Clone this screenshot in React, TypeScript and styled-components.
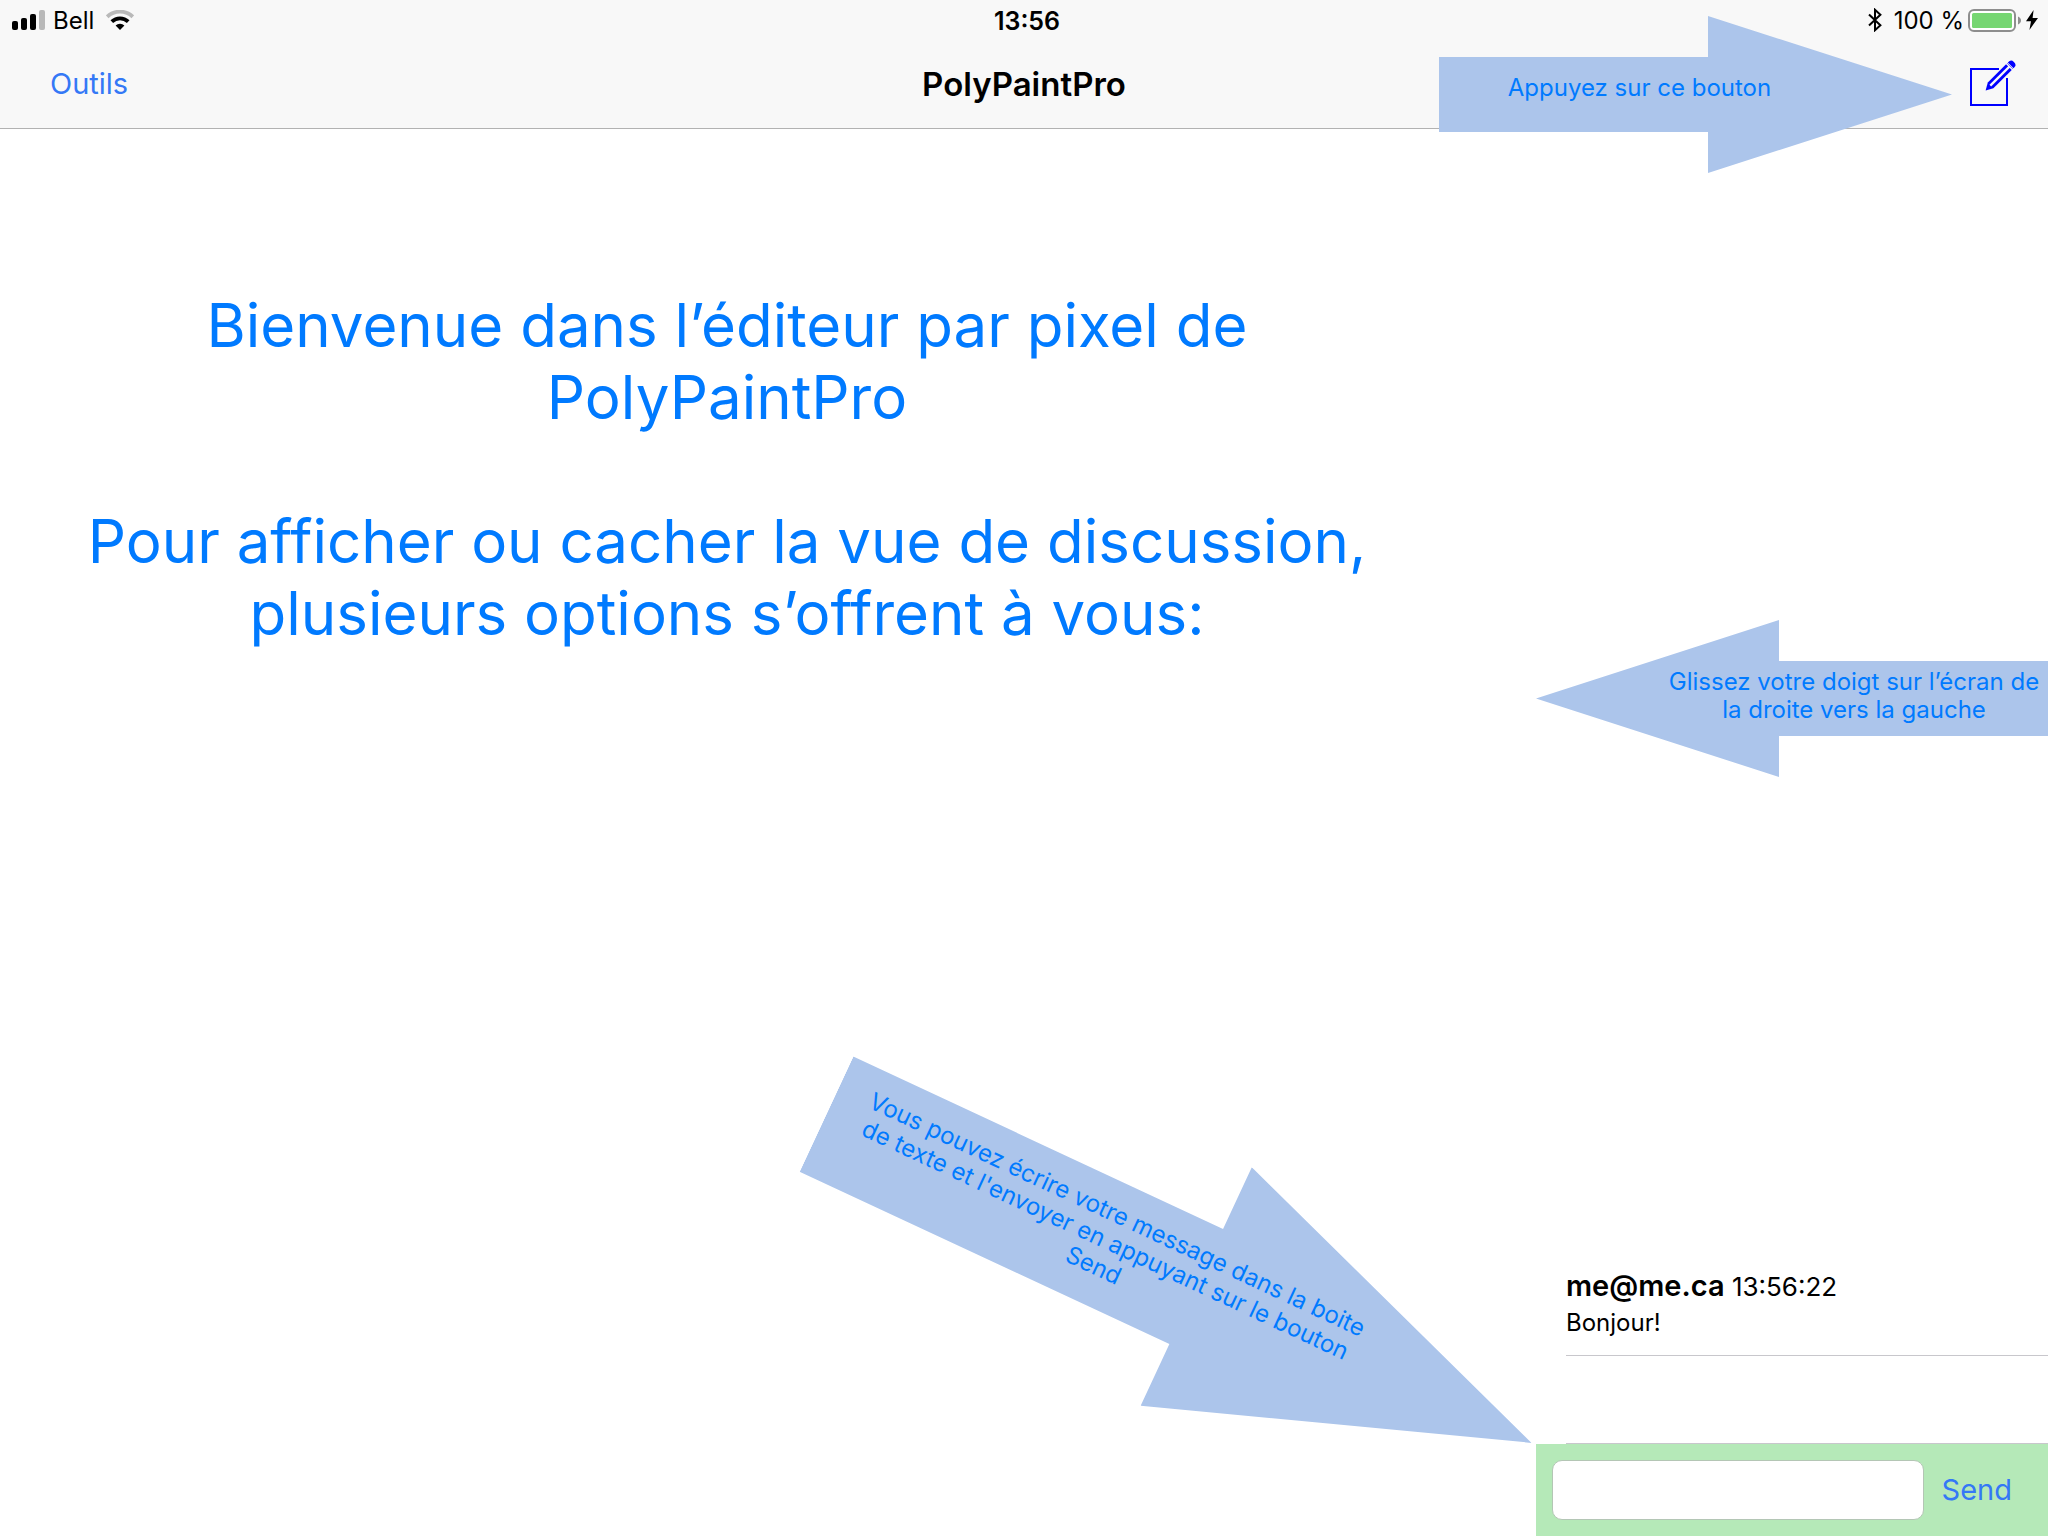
import React, { useState } from "react";
import styled, { createGlobalStyle } from "styled-components";

const color = {
  bar: "#f8f8f8",
  barLine: "#b2b2b2",
  tint: "#007aff",
  link: "#3478f6",
  arrow: "#acc5eb",
  rule: "#c8c7cc",
  composer: "#b5e9b8",
};

const GlobalStyle = createGlobalStyle`
  * { box-sizing: border-box; }
  body { margin: 0; background: #fff; }
  body, button, input { font-family: Inter, "Liberation Sans", sans-serif; }
  p, h1 { margin: 0; }
`;

const Page = styled.div`
  position: relative;
  display: flex;
  flex-direction: column;
  min-height: 100vh;
  overflow: hidden;
  color: #000;
`;

const Header = styled.header`
  background: ${color.bar};
  border-bottom: 1px solid ${color.barLine};
`;

const StatusBar = styled.div`
  display: grid;
  grid-template-columns: 1fr auto 1fr;
  align-items: center;
  height: 40px;
  padding: 0 10px 0 12px;
  font-size: 24px;
  line-height: 32px;
`;

const StatusGroup = styled.div<{ $end?: boolean }>`
  display: flex;
  align-items: center;
  justify-content: ${(p) => (p.$end ? "flex-end" : "flex-start")};
  gap: ${(p) => (p.$end ? "4px" : "8px")};

  svg { flex: none; }
`;

const Carrier = styled.span`
  padding: 2px 4px 0 0;
`;

const BatteryLevel = styled.span`
  padding: 2px 0 0 8px;
`;

const Clock = styled.time`
  padding: 2px 0 0 4px;
  font-size: 25px;
  font-weight: 600;
`;

const NavBar = styled.nav`
  display: grid;
  grid-template-columns: 1fr auto 1fr;
  align-items: center;
  height: 88px;
  padding: 0 32px;
`;

const Title = styled.h1`
  font-size: 33px;
  line-height: 40px;
  font-weight: 600;
`;

const TextButton = styled.button`
  justify-self: start;
  padding: 0 18px;
  border: 0;
  background: none;
  color: ${color.link};
  font-size: 29px;
  line-height: 40px;
`;

const IconButton = styled.button`
  justify-self: end;
  display: flex;
  padding: 0;
  border: 0;
  background: none;
  color: #00f;
`;

const Body = styled.div`
  flex: 1;
  display: grid;
  grid-template-columns: minmax(0, 3fr) minmax(0, 1fr);
`;

const Canvas = styled.main`
  padding: 160px 146px 0 64px;
  color: ${color.tint};
  font-size: 60px;
  line-height: 72px;
  text-align: center;

  p + p { margin-top: 72px; }
`;

const Chat = styled.aside`
  display: flex;
  flex-direction: column;
  justify-content: flex-end;
`;

const Messages = styled.ul`
  margin: 0;
  padding: 0 0 0 30px;
  list-style: none;
`;

const Message = styled.li`
  height: 88px;
  border-bottom: 1px solid ${color.rule};
`;

const Meta = styled.p`
  font-size: 26px;
  line-height: 36px;

  strong { font-size: 29px; font-weight: 600; }
`;

const MessageText = styled.p`
  font-size: 24px;
  line-height: 36px;
`;

const Composer = styled.form`
  display: flex;
  align-items: center;
  height: 92px;
  padding: 0 18px 0 16px;
  background: ${color.composer};
`;

const MessageInput = styled.input`
  flex: 1;
  min-width: 0;
  height: 60px;
  padding: 0 16px;
  border: 1px solid #b4c6b5;
  border-radius: 10px;
  background: #fff;
  font-size: 24px;
`;

const Callout = styled.div`
  position: absolute;
  display: flex;
  align-items: center;
  justify-content: center;
  background: ${color.arrow};
  color: ${color.tint};
  font-size: 24px;
  line-height: 28px;
  text-align: center;
  pointer-events: none;
`;

const EditCallout = styled(Callout)`
  top: 16px;
  right: 96px;
  width: 513px;
  height: 157px;
  padding: 0 112px 14px 0;
  clip-path: polygon(0 41px, 269px 41px, 269px 0, 100% 50%, 269px 100%, 269px 116px, 0 116px);
`;

const SwipeCallout = styled(Callout)`
  top: 620px;
  right: 0;
  width: 512px;
  height: 157px;
  padding: 0 0 6px 124px;
  clip-path: polygon(0 50%, 243px 0, 243px 41px, 100% 41px, 100% 116px, 243px 116px, 243px 100%);
`;

const SendCallout = styled(Callout)`
  right: 480px;
  bottom: 126px;
  width: 778px;
  height: 263px;
  padding: 0 192px 8px 26px;
  transform: rotate(25deg);
  clip-path: polygon(0 68px, 408px 68px, 408px 0, 100% 50%, 408px 100%, 408px 195px, 0 195px);
`;

const SignalIcon = () => (
  <svg width="33" height="20" viewBox="0 0 33 20" aria-hidden="true">
    <rect x="0" y="11" width="6" height="9" rx="2" />
    <rect x="9" y="8" width="6" height="12" rx="2" />
    <rect x="18" y="4" width="6" height="16" rx="2" />
    <rect x="27" y="0" width="6" height="20" rx="2" fill="#b9b9b9" />
  </svg>
);

const WifiIcon = () => (
  <svg width="28" height="20" viewBox="0 0 28 20" fill="none" aria-hidden="true">
    <path d="M1.2 6.8a18.4 18.4 0 0 1 25.6 0" stroke="#b9b9b9" strokeWidth="3.8" />
    <path d="M5.8 11.6a11.8 11.8 0 0 1 16.4 0" stroke="#000" strokeWidth="3.8" />
    <path d="M14 20l-4.4-4.4a6.4 6.4 0 0 1 8.8 0z" fill="#000" />
  </svg>
);

const BluetoothIcon = () => (
  <svg width="14" height="24" viewBox="0 0 14 24" fill="none" stroke="#000" strokeWidth="2" aria-hidden="true">
    <path d="M1 6.5l11.4 10.8L7 22.2V1.8l5.4 4.9L1 17.5" />
  </svg>
);

const BatteryIcon = () => (
  <svg width="54" height="24" viewBox="0 -1 54 24" aria-hidden="true">
    <rect x="1" y="1" width="46" height="21" rx="5" fill="#fff" stroke="#8e8e8e" strokeWidth="2" />
    <rect x="4" y="4" width="40" height="15" rx="1.5" fill="#76d672" />
    <path d="M50 7.6c4 1.6 4 6.4 0 8z" fill="#8e8e8e" />
  </svg>
);

const BoltIcon = () => (
  <svg width="12" height="20" viewBox="0 0 12 20" aria-hidden="true">
    <path d="M7.6 0L0 11.3h5L3.4 20 12 8H6.6z" />
  </svg>
);

const ComposeIcon = () => (
  <svg width="46" height="48" viewBox="0 0 46 48" fill="none" aria-hidden="true">
    <path d="M29 9H1v36h36V18" stroke="currentColor" strokeWidth="2" />
    <path d="M15.6 30.4l2.2-7.9L37.3 3l5.700 5.700L23.400 28.200z" fill="currentColor" />
    <path d="M20.300 25.700L39.500 6.500" stroke="#f8f8f8" strokeWidth="2.400" />
    <path d="M35.800 3l7.200 7.200" stroke="#f8f8f8" strokeWidth="1.400" />
    <path d="M37.800 2.600l1.800-1.500q1.900-1.400 4.300.8t1.300 4.400l-1.600 2z" fill="currentColor" />
  </svg>
);

export default function App() {
  const [draft, setDraft] = useState("");

  return (
    <Page>
      <GlobalStyle />
      <Header>
        <StatusBar>
          <StatusGroup>
            <SignalIcon />
            <Carrier>Bell</Carrier>
            <WifiIcon />
          </StatusGroup>
          <Clock>13:56</Clock>
          <StatusGroup $end>
            <BluetoothIcon />
            <BatteryLevel>100 %</BatteryLevel>
            <BatteryIcon />
            <BoltIcon />
          </StatusGroup>
        </StatusBar>
        <NavBar>
          <TextButton type="button">Outils</TextButton>
          <Title>PolyPaintPro</Title>
          <IconButton type="button" aria-label="Discussion">
            <ComposeIcon />
          </IconButton>
        </NavBar>
      </Header>

      <Body>
        <Canvas>
          <p>Bienvenue dans l’éditeur par pixel de PolyPaintPro</p>
          <p>Pour afficher ou cacher la vue de discussion, plusieurs options s’offrent à vous:</p>
        </Canvas>
        <Chat>
          <Messages>
            <Message>
              <Meta>
                <strong>me@me.ca</strong> <time>13:56:22</time>
              </Meta>
              <MessageText>Bonjour!</MessageText>
            </Message>
            <Message aria-hidden="true" />
          </Messages>
          <Composer onSubmit={(e) => e.preventDefault()}>
            <MessageInput
              type="text"
              aria-label="Message"
              value={draft}
              onChange={(e) => setDraft(e.target.value)}
            />
            <TextButton type="submit">Send</TextButton>
          </Composer>
        </Chat>
      </Body>

      <EditCallout>Appuyez sur ce bouton</EditCallout>
      <SwipeCallout>Glissez votre doigt sur l’écran de la droite vers la gauche</SwipeCallout>
      <SendCallout>
        Vous pouvez écrire votre message dans la boite de texte et l'envoyer en appuyant sur le bouton Send
      </SendCallout>
    </Page>
  );
}
